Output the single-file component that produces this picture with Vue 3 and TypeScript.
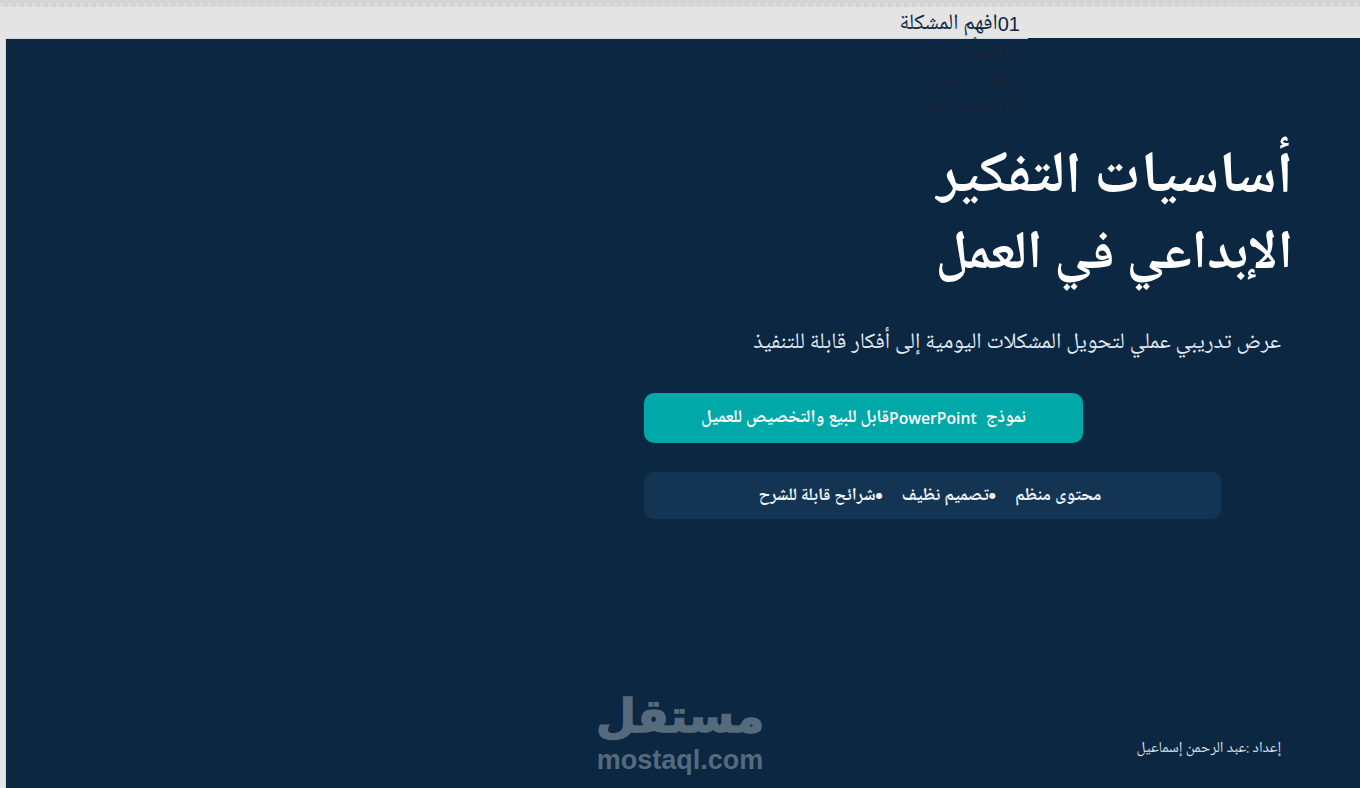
<script setup lang="ts">
const tabs: { num: string; label: string }[] = [
  { num: '01', label: 'افهم المشكلة' },
  { num: '02', label: 'اسأل بذكاء' },
  { num: '03', label: 'ولد بدائل' },
  { num: '04', label: 'اختبر الحل' },
]
</script>

<template>
  <div class="page" dir="rtl">
    <div class="chrome"></div>
    <header class="bar">
      <nav class="tabs">
        <div v-for="(t, i) in tabs" :key="t.num" class="tab" :class="{ active: i === 0 }">
          <span class="num">{{ t.num }}</span><span>{{ t.label }}</span>
        </div>
      </nav>
    </header>
    <main class="slide">
      <h1 class="title"><span class="line-a">أساسيات التفكير</span><span class="line-b">الإبداعي في العمل</span></h1>
      <p class="sub">عرض تدريبي عملي لتحويل المشكلات اليومية إلى أفكار قابلة للتنفيذ</p>
      <div class="cta">
        <span class="cta-first">نموذج</span><b>PowerPoint</b><span>قابل للبيع والتخصيص للعميل</span>
      </div>
      <div class="chips">
        <span>محتوى منظم</span><span class="dot">●</span><span>تصميم نظيف</span><span class="dot">●</span><span class="chip-last">شرائح قابلة للشرح</span>
      </div>
      <footer class="foot">
        <span class="author">إعداد :عبد الرحمن إسماعيل</span>
        <div class="logo">
          <span class="logo-ar">مستقل</span>
          <span class="logo-en">mostaql.com</span>
        </div>
      </footer>
    </main>
  </div>
</template>

<style>
html, body { margin: 0; background: #e4e4e4; overflow: hidden; }
</style>

<style scoped>
.page {
  width: 1360px;
  height: 788px;
  display: flex;
  flex-direction: column;
  background: #e4e4e4;
  font-family: "Noto Naskh Arabic", "Noto Sans Arabic", "DejaVu Sans", "Noto Sans", sans-serif;
  overflow: hidden;
}
.chrome {
  height: 3px;
  background: #d4d4d4;
  border-bottom: 4px dotted #dedede;
  flex: none;
}
.bar {
  height: 31px;
  flex: none;
  position: relative;
  z-index: 1;
  padding-right: 333px;
}
.tabs {
  display: flex;
  flex-direction: column;
  align-items: flex-start;
}
.tab {
  display: flex;
  height: 26.5px;
  align-items: center;
  font-size: 22px;
  line-height: 26px;
  color: #182438;
  padding-right: 7px;
  white-space: nowrap;
}
.tab.active {
  color: #0b2742;
  margin-top: 4px;
  margin-bottom: 2px;
}
.num { font-family: "Liberation Sans", sans-serif; font-size: 20px; }
.slide {
  flex: 1;
  margin-left: 5px;
  background: #0b2742;
  border-top: 1px solid #d2d8da;
  border-left: 1px solid #d2d8da;
  border-image: linear-gradient(to left, #0b2742 333px, #d2d8da 333px) 1;
  padding: 103px 67px 0 0;
  display: flex;
  flex-direction: column;
  align-items: flex-start;
  color: #fff;
}
.title {
  margin: 0;
  font-weight: 700;
}
.line-a, .line-b {
  display: block;
  line-height: 76px;
  white-space: nowrap;
}
.line-a { font-size: 58px; }
.line-b { font-size: 54px; }
.sub {
  margin: 34px 12px 0 0;
  font-size: 22.2px;
  line-height: 30px;
  color: #e3ebf2;
}
.cta {
  margin: 35px 210px 0 0;
  width: 439px;
  height: 50px;
  border-radius: 10px;
  background: #00a8a8;
  display: flex;
  align-items: center;
  justify-content: center;
  font-size: 17.8px;
  font-weight: 700;
  box-sizing: border-box;
}
.cta-first { margin-left: 9px; }
.cta b { font-family: "Open Sans", sans-serif; font-weight: 600; font-size: 15.7px; }
.chips {
  margin: 29px 72px 0 0;
  width: 577px;
  height: 47px;
  border-radius: 9px;
  background: #133453;
  display: flex;
  align-items: center;
  justify-content: center;
  font-size: 17.8px;
  font-weight: 700;
  color: #f0f3f6;
  box-sizing: border-box;
  padding-right: 5px;
}
.chips .dot { font-size: 8px; margin-right: 19px; }
.chips .chip-last { font-size: 17.4px; }
.foot {
  margin-top: auto;
  width: 100%;
  height: 94px;
  display: flex;
  justify-content: space-between;
  align-items: flex-start;
  padding-right: 12px;
  box-sizing: border-box;
}
.author {
  margin-top: 46px;
  font-size: 15.2px;
  line-height: 18px;
  color: #d6e0e8;
}
.logo {
  margin-left: 592px;
  width: 164px;
  display: flex;
  flex-direction: column;
  align-items: center;
  color: #566a7d;
  line-height: 1;
  margin-top: -4px;
}
.logo-ar {
  font-family: "DejaVu Sans", sans-serif;
  font-size: 46px;
  font-weight: 700;
  line-height: 52px;
  -webkit-text-stroke: 1.5px #566a7d;
}
.logo-en {
  font-family: "Liberation Sans", sans-serif;
  font-weight: 700;
  font-size: 27px;
  line-height: 30px;
  margin-top: 3px;
}
</style>
